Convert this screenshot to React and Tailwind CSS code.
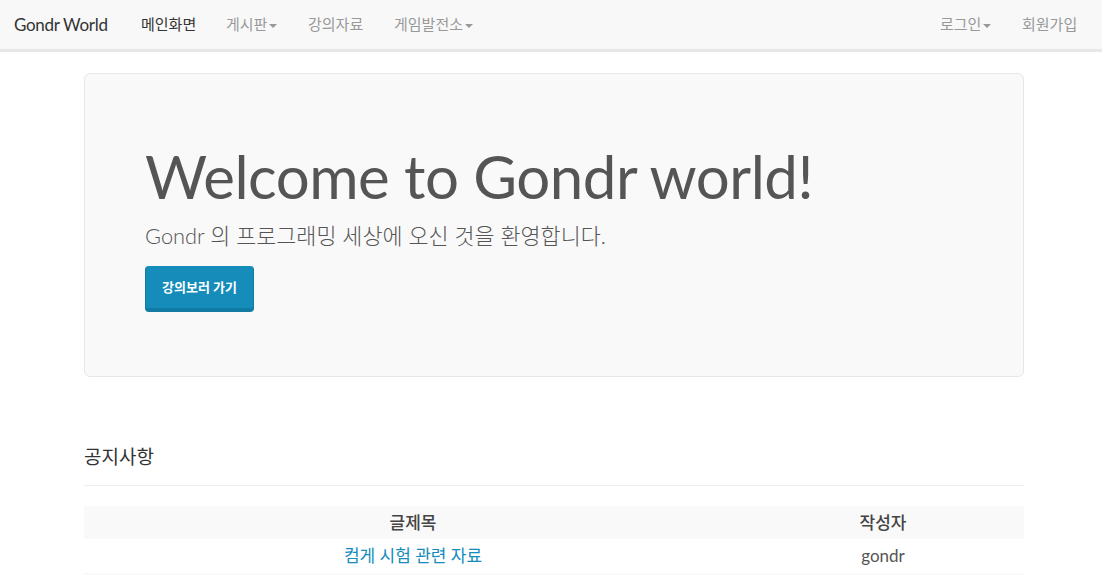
import React from "react";

function Caret() {
  return (
    <span className="ml-[2px] inline-block h-0 w-0 border-x-[4px] border-t-[4px] border-x-transparent border-t-[#999] align-middle" />
  );
}

export default function App() {
  return (
    <div className="h-[575px] overflow-hidden bg-white text-[15px] text-[#555] font-['Lato','Noto_Sans_CJK_KR',sans-serif]">
      {/* Navbar */}
      <nav className="h-[52px] border-b-[3px] border-[#e7e7e7] bg-[#f8f8f8]">
        <div className="flex h-[49px] items-center justify-between pl-[14px]">
          <div className="flex items-center">
            <a className="w-[127px] text-[17px] tracking-[-0.3px] text-[#333]">Gondr World</a>
            <ul className="flex items-center">
              <li className="w-[85px] text-[#333]">메인화면</li>
              <li className="w-[82px] text-[#999]">
                게시판
                <Caret />
              </li>
              <li className="w-[86px] text-[#999]">강의자료</li>
              <li className="text-[#999]">
                게임발전소
                <Caret />
              </li>
            </ul>
          </div>
          <ul className="flex w-[162px] items-center">
            <li className="w-[82px] text-[#999]">
              로그인
              <Caret />
            </li>
            <li className="text-[#999]">회원가입</li>
          </ul>
        </div>
      </nav>

      <div className="ml-[84px] w-[940px] pt-[21px]">
        {/* Jumbotron */}
        <div className="rounded-[6px] border border-[#e7e7e7] bg-[#f9f9f9] px-[60px] pt-[48px] pb-[49px]">
          <h1 className="mt-[20px] mb-[10px] text-[60px] leading-[69px] tracking-[-0.5px] text-[#555]">
            Welcome to Gondr world!
          </h1>
          <p className="mb-[15px] text-[21.8px] font-light leading-[30px] text-[#555]">
            Gondr 의 프로그래밍 세상에 오신 것을 환영합니다.
          </p>
          <p className="mb-[15px]">
            <a className="inline-block rounded-[4px] border-x border-b-[4px] border-[#127ba3] bg-[#158cba] px-[16px] py-[13px] text-[13px] font-bold leading-[16px] text-white">
              강의보러 가기
            </a>
          </p>
        </div>

        {/* Notice */}
        <div className="mt-[62px] border-b border-[#eee] pb-[10px]">
          <h3 className="text-[19px] leading-[36px] text-[#333]">공지사항</h3>
        </div>

        <table className="mt-[20px] w-full text-center text-[17px]">
          <tbody>
            <tr className="h-[33px] bg-[#f9f9f9]">
              <th className="w-[658px] font-medium text-[#444]">글제목</th>
              <th className="font-medium text-[#444]">작성자</th>
            </tr>
            <tr className="h-[34px]">
              <td className="text-[#158cba]">컴게 시험 관련 자료</td>
              <td className="text-[#555]">gondr</td>
            </tr>
            <tr className="h-[34px] bg-[#f9f9f9]">
              <td className="text-[#158cba]">&nbsp;</td>
              <td className="text-[#555]">&nbsp;</td>
            </tr>
          </tbody>
        </table>
      </div>
    </div>
  );
}
